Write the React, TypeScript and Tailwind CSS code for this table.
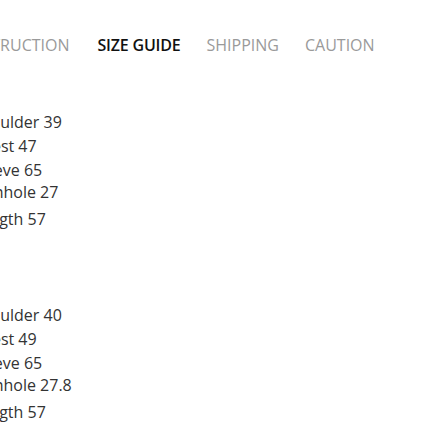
export default function App() {
  const blocks = [
    ["Shoulder 39", "Chest 47", "Sleeve 65", "Armhole 27", "Length 57"],
    ["Shoulder 40", "Chest 49", "Sleeve 65", "Armhole 27.8", "Length 57"],
  ];
  const margins = ["", "mt-[2px]", "mt-[2px]", "", "mt-[5px]"];
  return (
    <div className="w-[442px] h-[442px] bg-white overflow-hidden" style={{ fontFamily: '"Open Sans", sans-serif' }}>
      <div className="flex items-center gap-[26px] ml-[-34px] pt-[34px] text-[16px] leading-[22px] whitespace-nowrap">
        <span className="text-[#9a9a9a] mr-[2px]">INSTRUCTION</span>
        <span className="text-[#111] font-semibold tracking-[-0.2px]">SIZE GUIDE</span>
        <span className="text-[#9a9a9a]">SHIPPING</span>
        <span className="text-[#9a9a9a]">CAUTION</span>
      </div>
      <div className="ml-[-28px] pt-[55px] text-[16px] text-[#333] whitespace-nowrap">
        {blocks.map((b, i) => (
          <div key={i} className={i === 0 ? "" : "mt-[74px]"}>
            {b.map((t, j) => (
              <div key={j} className={`${margins[j]} h-[22px] leading-[22px]`}>{t}</div>
            ))}
          </div>
        ))}
      </div>
    </div>
  );
}
